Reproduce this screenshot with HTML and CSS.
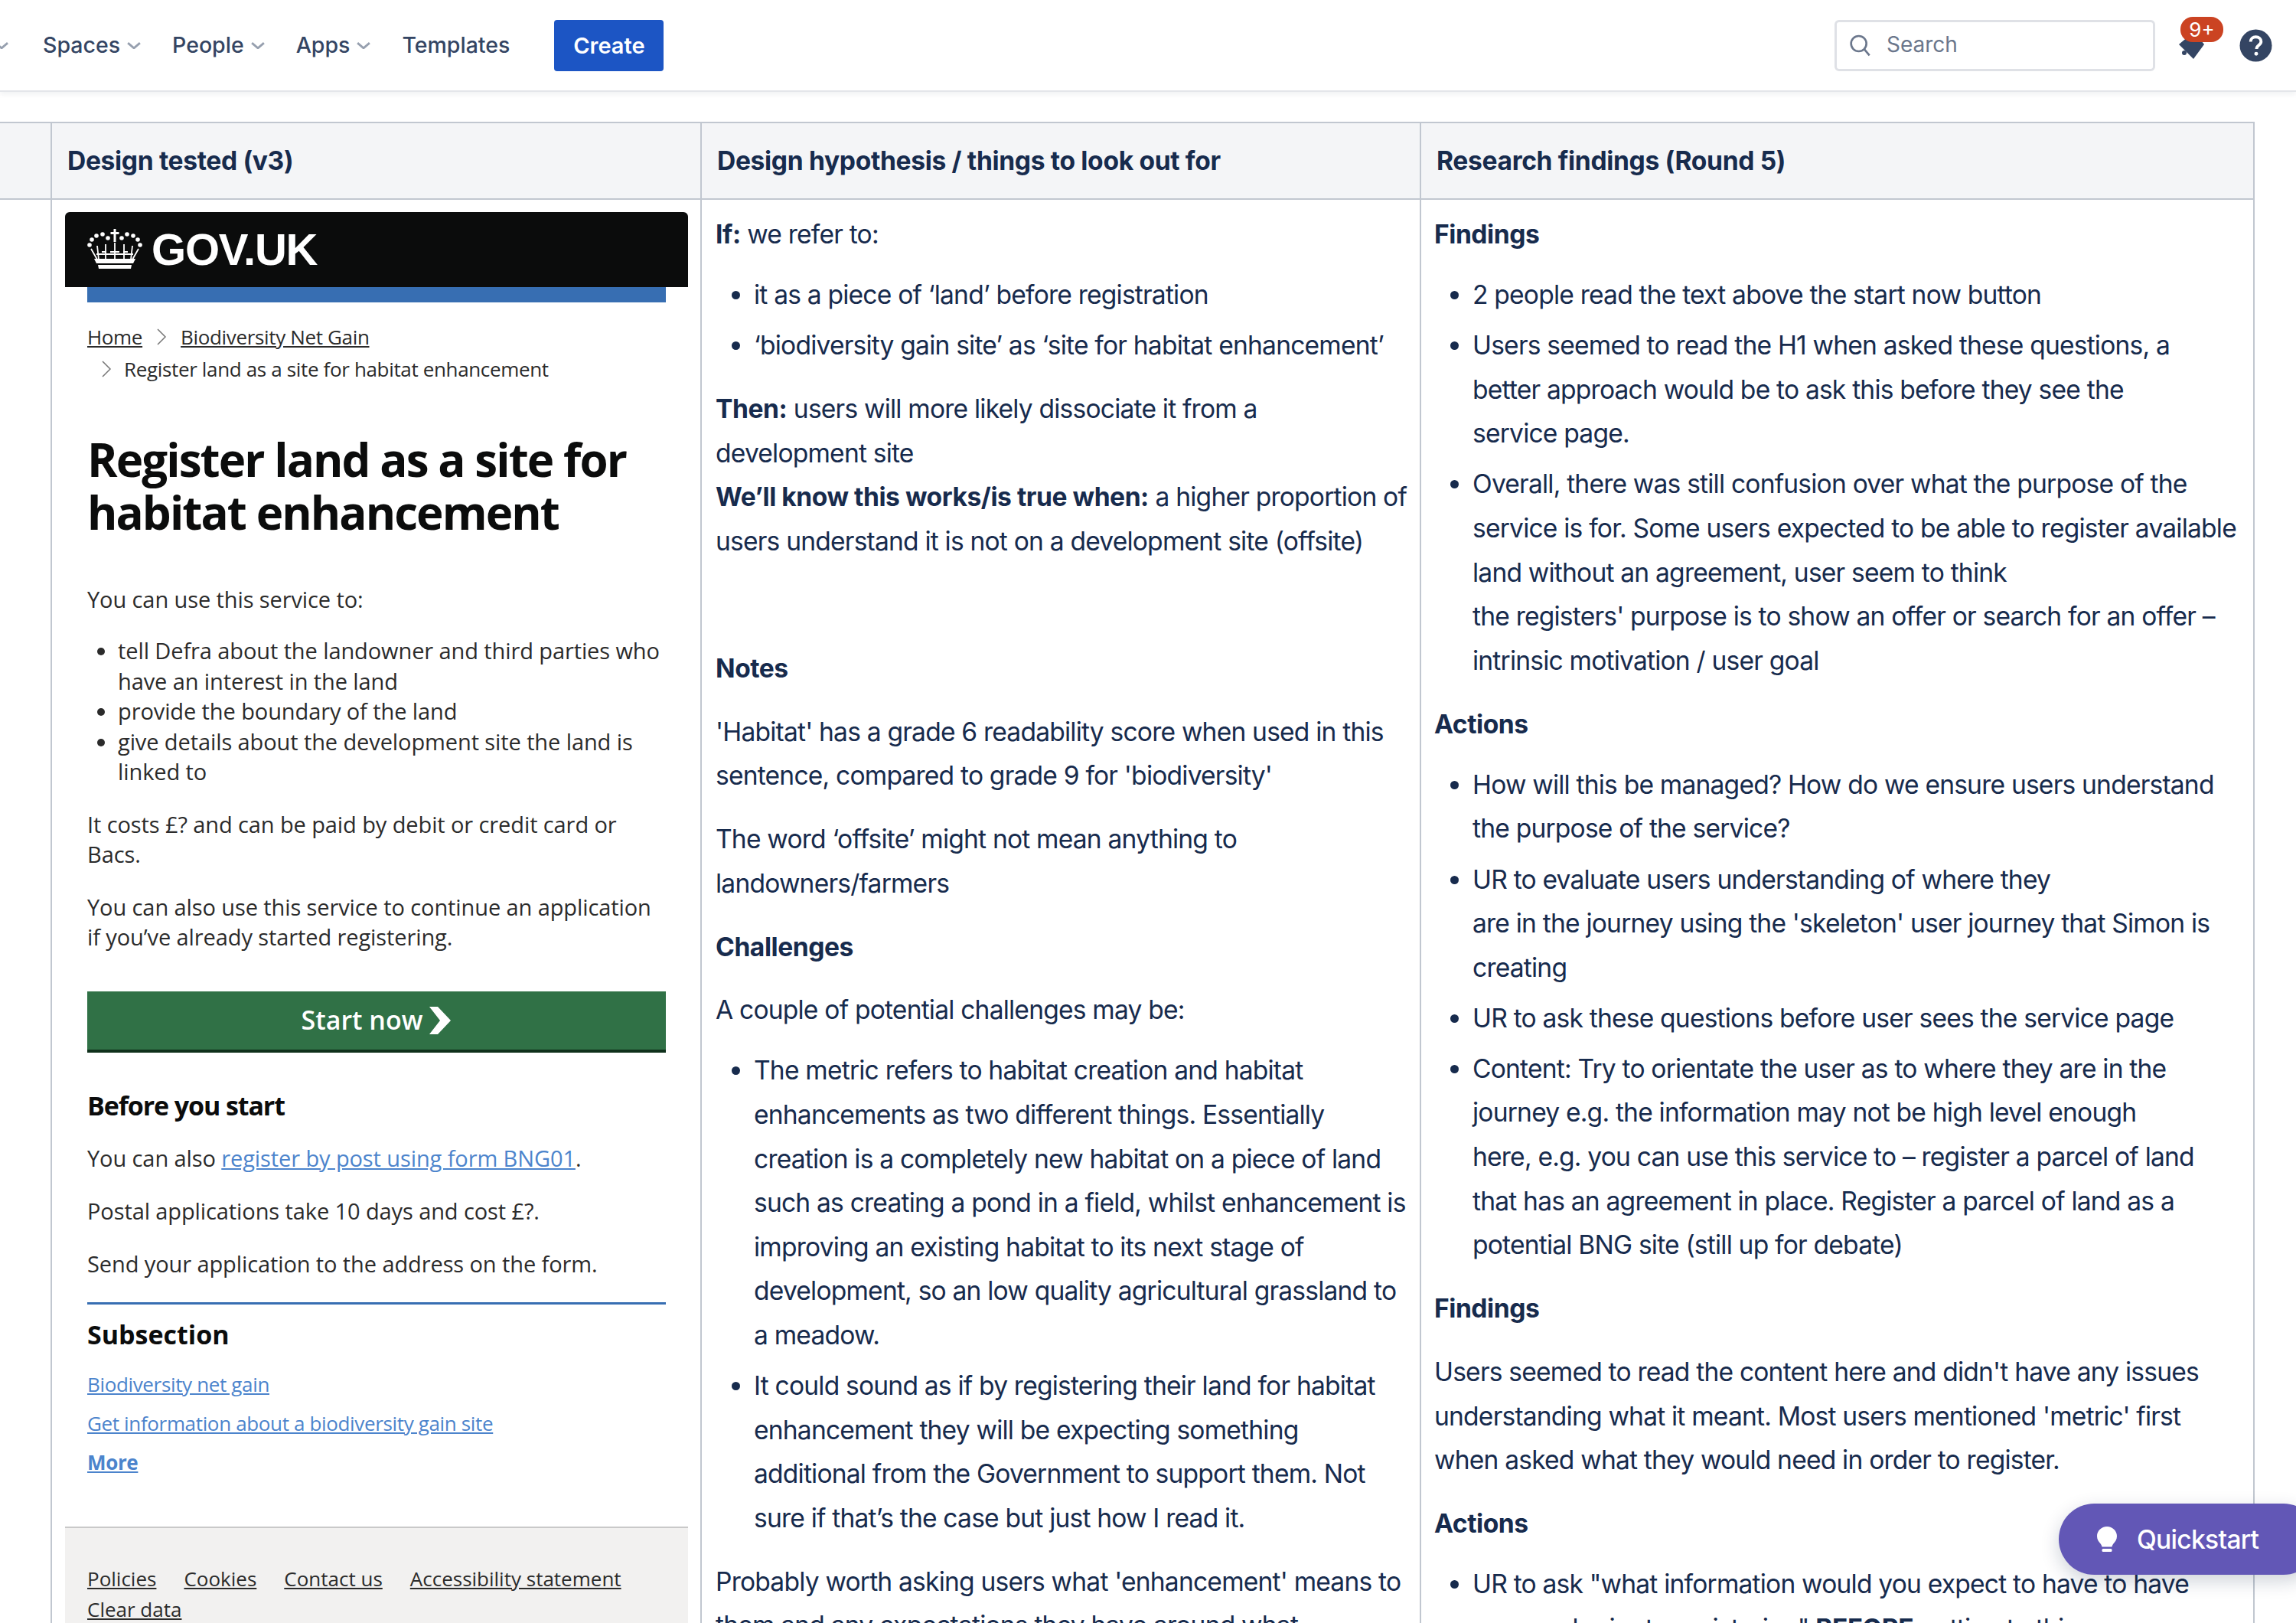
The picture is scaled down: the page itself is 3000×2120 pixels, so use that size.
FILE: index.html
```html
<!DOCTYPE html>
<html lang="en">
<head>
  <meta charset="UTF-8" />
  <title>Design tested</title>
  <link rel="stylesheet" href="styles.css">
</head>
<body>

<header class="topbar">
  <svg class="chev chev-cut" viewBox="11 8 8 8"><path d="M5 9l7 6 7-6"/></svg>
  <a class="nav-link nav-first">Spaces<svg class="chev" viewBox="4 8 16 8"><path d="M5 9l7 6 7-6"/></svg></a>
  <a class="nav-link">People<svg class="chev" viewBox="4 8 16 8"><path d="M5 9l7 6 7-6"/></svg></a>
  <a class="nav-link">Apps<svg class="chev" viewBox="4 8 16 8"><path d="M5 9l7 6 7-6"/></svg></a>
  <a class="nav-link nav-last">Templates</a>
  <button class="create-btn">Create</button>
  <div class="topbar-right">
    <div class="search">
      <svg class="search-icon" viewBox="0 0 24 24"><circle cx="11" cy="10.500" r="7.500"/><path d="M16.500 16l5 6"/></svg>
      <span>Search</span>
    </div>
    <div class="bell">
      <svg viewBox="0 0 34 36"><path d="M0 17L20 0l13 17-14 19z"/><circle cx="7" cy="28" r="3"/></svg>
      <span class="badge">9+</span>
    </div>
    <svg class="help" viewBox="0 0 44 44"><circle cx="22" cy="22" r="21.500"/><path class="help-mark" d="M15 17c0-4 3-6.500 7-6.500s7 2.500 7 6c0 5-6 5-6 10"/><circle class="help-dot" cx="22.500" cy="33" r="2.500"/></svg>
  </div>
</header>

<table class="grid">
  <colgroup>
    <col class="col-0"><col class="col-1"><col class="col-2"><col class="col-3">
  </colgroup>
  <thead>
    <tr>
      <th></th>
      <th>Design tested (v3)</th>
      <th>Design hypothesis / things to look out for</th>
      <th>Research findings (Round 5)</th>
    </tr>
  </thead>
  <tbody>
    <tr>
      <td></td>
      <td class="shot-cell">
        <div class="gov">
          <div class="gov-head">
            <svg class="crown" viewBox="0 0 72 52">
              <path d="M34.500 0h3v4h4v3h-4v10h-3V7h-4V4h4z"/>
              <circle cx="27" cy="12" r="2.800"/><circle cx="45" cy="12" r="2.800"/>
              <circle cx="20" cy="7" r="2.800"/><circle cx="52" cy="7" r="2.800"/>
              <circle cx="12" cy="9" r="2.800"/><circle cx="60" cy="9" r="2.800"/>
              <circle cx="6" cy="14" r="2.800"/><circle cx="66" cy="14" r="2.800"/>
              <circle cx="3" cy="21" r="2.800"/><circle cx="69" cy="21" r="2.800"/>
              <path class="crown-lines" d="M36 18v22M24 20v20M48 20v20M13 22l2 18M59 22l-2 18M5 26l8 14M67 26l-8 14M19 30h6M30 30h12M47 30h6M12 33h48"/>
              <path d="M9 39h54l-3 6H12zM14 47h44l-1 5H15z"/>
            </svg>
            <span class="gov-logo">GOV.UK</span>
          </div>
          <div class="gov-bar"></div>
          <div class="gov-body">
            <div class="crumbs">
              <a>Home</a><svg class="crumb-sep" viewBox="0 0 14 24"><path d="M2 2l10 10L2 22"/></svg><a>Biodiversity Net Gain</a>
            </div>
            <div class="crumbs crumbs-last">
              <svg class="crumb-sep" viewBox="0 0 14 24"><path d="M2 2l10 10L2 22"/></svg>Register land as a site for habitat enhancement
            </div>
            <h1>Register land as a site for habitat enhancement</h1>
            <p class="gov-lede">You can use this service to:</p>
            <ul class="gov-list">
              <li>tell Defra about the landowner and third parties who have an interest in the land</li>
              <li>provide the boundary of the land</li>
              <li>give details about the development site the land is linked to</li>
            </ul>
            <p class="gov-p">It costs £? and can be paid by debit or credit card or Bacs.</p>
            <p class="gov-p">You can also use this service to continue an application if you’ve already started registering.</p>
            <div class="start-btn">Start now<svg viewBox="0 0 30 38"><path d="M1 1h11l17 18-17 18H1l14-18z"/></svg></div>
            <h2>Before you start</h2>
            <p class="gov-q">You can also <a class="gov-a">register by post using form BNG01</a>.</p>
            <p class="gov-q">Postal applications take 10 days and cost £?.</p>
            <p class="gov-q">Send your application to the address on the form.</p>
            <div class="gov-rule"></div>
            <h3>Subsection</h3>
            <a class="sub-link">Biodiversity net gain</a>
            <a class="sub-link">Get information about a biodiversity gain site</a>
            <a class="sub-link sub-more">More</a>
          </div>
          <div class="gov-foot">
            <a>Policies</a><a>Cookies</a><a>Contact us</a><a>Accessibility statement</a><a>Clear data</a>
          </div>
        </div>
      </td>
      <td>
        <p><strong>If:</strong> we refer to:</p>
        <ul>
          <li>it as a piece of ‘land’ before registration</li>
          <li>‘biodiversity gain site’ as ‘site for habitat enhancement’</li>
        </ul>
        <p><strong>Then:</strong> users will more likely dissociate it from a development site<br>
          <strong>We’ll know this works/is true when:</strong> a higher proportion of users understand it is not on a development site (offsite)</p>
        <p><br></p>
        <p><strong>Notes</strong></p>
        <p>'Habitat' has a grade 6 readability score when used in this sentence, compared to grade 9 for 'biodiversity'</p>
        <p>The word ‘offsite’ might not mean anything to landowners/farmers</p>
        <p><strong>Challenges</strong></p>
        <p>A couple of potential challenges may be:</p>
        <ul>
          <li>The metric refers to habitat creation and habitat enhancements as two different things. Essentially creation is a completely new habitat on a piece of land such as creating a pond in a field, whilst enhancement is improving an existing habitat to its next stage of development, so an low quality agricultural grassland to a meadow.</li>
          <li>It could sound as if by registering their land for habitat enhancement they will be expecting something additional from the Government to support them. Not sure if that’s the case but just how I read it.</li>
        </ul>
        <p>Probably worth asking users what 'enhancement' means to them and any expectations they have around what</p>
      </td>
      <td>
        <p><strong>Findings</strong></p>
        <ul>
          <li>2 people read the text above the start now button</li>
          <li>Users seemed to read the H1 when asked these questions, a better approach would be to ask this before they see the service&nbsp;page.</li>
          <li>Overall, there was still confusion over what the purpose of the service is for. Some users expected to be able to register available land without an agreement, user seem to think<br>the registers' purpose is to show an offer or search for an offer – intrinsic motivation / user goal</li>
        </ul>
        <p><strong>Actions</strong></p>
        <ul>
          <li>How will this be managed? How do we ensure users understand the purpose of the service?</li>
          <li>UR to evaluate users understanding of where they<br>are in the journey using the 'skeleton' user journey that Simon is creating</li>
          <li>UR to ask these questions before user sees the service page</li>
          <li>Content: Try to orientate the user as to where they are in the journey e.g. the information may not be high level enough<br>here, e.g. you can use this service to – register a parcel of land that has an agreement in place. Register a parcel of land as a potential BNG site (still up for debate)</li>
        </ul>
        <p><strong>Findings</strong></p>
        <p>Users seemed to read the content here and didn't have any issues understanding what it meant. Most users mentioned 'metric' first when asked what they would need in order to register.</p>
        <p><strong>Actions</strong></p>
        <ul>
          <li>UR to ask "what information would you expect to have to have prepared prior to registering" <strong>BEFORE</strong> getting to this page</li>
        </ul>
      </td>
    </tr>
  </tbody>
</table>

<button class="quickstart">
  <svg viewBox="0 0 26 34"><path d="M13 0C5.800 0 0 5.600 0 12.600c0 4.200 2 7 4.200 9.400 1.200 1.400 2 2.800 2.300 4.500h13c.3-1.700 1.100-3.100 2.300-4.500 2.200-2.400 4.200-5.200 4.200-9.400C26 5.600 20.200 0 13 0z"/><rect x="6.500" y="29" width="13" height="4" rx="1.500"/></svg>
  Quickstart
</button>

</body>
</html>
```

FILE: styles.css
```css
html, body {
  margin: 0;
  height: 2120px;
  overflow: hidden;
  background: #fff;
}
body {
  font-family: Inter, "Liberation Sans", sans-serif;
  font-size: 33.6px;
  line-height: 57.6px;
  letter-spacing: -0.8px;
  color: #172b4d;
}

/* top bar */
.topbar {
  display: flex;
  align-items: center;
  height: 118px;
  border-bottom: 2px solid #e4e6ea;
  box-shadow: 0 4px 6px rgba(9, 30, 66, 0.05);
  font-size: 28.500px;
  letter-spacing: 0;
  color: #42526e;
}
.chev {
  width: 18px;
  height: 9px;
  margin-left: 9px;
  fill: none;
  stroke: #97a0af;
  stroke-width: 2.500;
}
.chev-cut {
  width: 11px;
  margin-left: 0;
}
.nav-link {
  display: flex;
  align-items: center;
  margin-right: 41px;
  color: #344563;
  font-weight: 500;
}
.nav-first {
  margin-left: 45px;
}
.nav-last {
  margin-right: 58px;
}
.create-btn {
  width: 143px;
  height: 67px;
  border: none;
  border-radius: 4px;
  background: #1c55c4;
  color: #fff;
  font: 600 29px Inter, sans-serif;
}
.topbar-right {
  display: flex;
  align-items: center;
  margin-left: auto;
  margin-right: 31px;
}
.search {
  display: flex;
  align-items: center;
  gap: 19px;
  box-sizing: border-box;
  width: 419px;
  height: 67px;
  padding-left: 14px;
  border: 3px solid #dfe1e6;
  border-radius: 6px;
  color: #6b778c;
  font-size: 28px;
  letter-spacing: 0;
}
.search-icon {
  width: 32px;
  height: 32px;
  fill: none;
  stroke: #6b778c;
  stroke-width: 2;
}
.bell {
  position: relative;
  width: 34px;
  height: 36px;
  margin-left: 31px;
}
.bell svg {
  display: block;
  width: 34px;
  height: 36px;
  fill: #344563;
}
.badge {
  position: absolute;
  top: -19px;
  left: 2px;
  width: 56px;
  height: 33px;
  border-radius: 16px;
  background: #cb4322;
  color: #fff;
  font-size: 26px;
  line-height: 33px;
  text-align: center;
}
.help {
  width: 43px;
  height: 43px;
  margin-left: 45px;
}
.help circle {
  fill: #344563;
}
.help .help-dot {
  fill: #fff;
}
.help-mark {
  fill: none;
  stroke: #fff;
  stroke-width: 4;
}

/* table */
.grid {
  width: 2946px;
  margin-top: 39px;
  table-layout: fixed;
  border-collapse: collapse;
}
.col-0 { width: 67px; }
.col-1 { width: 849px; }
.col-2 { width: 940px; }
.col-3 { width: 1089px; }
.grid th,
.grid td {
  border: 2px solid #c1c7d0;
  vertical-align: top;
}
.grid th:first-child,
.grid td:first-child {
  border-left: none;
}
.grid th {
  height: 98px;
  padding: 0 20px;
  background: #f4f5f7;
  text-align: left;
  vertical-align: middle;
  font-weight: 700;
  letter-spacing: -0.33px;
}
.grid td {
  padding: 16px 14px 0 18px;
}
.grid td:last-child {
  padding-left: 17px;
}
.grid p {
  margin: 25.300px 0 0;
}
.grid td > p:first-child {
  margin-top: 0;
}
.grid ul {
  margin: 21.500px 0 0;
  padding-left: 50px;
}
.grid li {
  margin-top: 8.500px;
}
.grid li:first-child {
  margin-top: 0;
}
.grid strong {
  font-weight: 700;
  letter-spacing: -0.45px;
}

/* the pasted GOV.UK picture */
.grid .shot-cell {
  padding: 16px 16px 0 17px;
}
.gov {
  font-family: "Open Sans", sans-serif;
  letter-spacing: 0;
  color: #2b2b2b;
}
.gov-head {
  display: flex;
  align-items: center;
  gap: 12px;
  box-sizing: border-box;
  height: 98px;
  padding: 0 0 2px 29px;
  border-radius: 6px 6px 0 0;
  background: #0b0c0c;
  color: #fff;
}
.crown {
  width: 72px;
  height: 52px;
  fill: #fff;
}
.crown-lines {
  fill: none;
  stroke: #fff;
  stroke-width: 1.800;
}
.gov-logo {
  font: 700 58px "Liberation Sans", sans-serif;
  letter-spacing: -1.200px;
}
.gov-bar {
  height: 20px;
  margin: 0 29px;
  background: #376eb2;
}
.gov-body {
  padding: 24px 29px 0;
}
.crumbs {
  display: flex;
  align-items: center;
  height: 42px;
  font-size: 26px;
  line-height: 36px;
  letter-spacing: -0.35px;
}
.crumbs a {
  text-decoration: underline;
}
.crumb-sep {
  width: 14px;
  height: 24px;
  margin: 0 18px;
  fill: none;
  stroke: #777;
  stroke-width: 1.500;
}
.crumbs-last .crumb-sep {
  margin: 0 16px 0 18px;
}
.gov h1 {
  margin: 63px 0 0;
  font-size: 60px;
  line-height: 69px;
  letter-spacing: -1.900px;
  color: #0b0c0c;
}
.grid .gov-lede {
  margin: 59px 0 0;
  font-size: 29px;
  line-height: 39px;
  letter-spacing: -0.1px;
}
.grid .gov-list {
  margin: 28px 0 0;
  padding-left: 40px;
  font-size: 29px;
  line-height: 39.500px;
  letter-spacing: -0.1px;
}
.grid .gov-list li {
  margin: 0;
}
.grid .gov-p {
  margin: 29px 0 0;
  font-size: 29px;
  line-height: 39.500px;
  letter-spacing: -0.1px;
}
.start-btn {
  display: flex;
  align-items: center;
  justify-content: center;
  gap: 8px;
  box-sizing: border-box;
  height: 80px;
  margin-top: 51px;
  border-bottom: 4px solid #10311c;
  background: #307146;
  color: #fff;
  font-size: 34px;
  font-weight: 600;
}
.start-btn svg {
  width: 30px;
  height: 38px;
  fill: #fff;
}
.gov h2 {
  margin: 46px 0 -2px;
  font-size: 34px;
  line-height: 46px;
  letter-spacing: -1.100px;
  color: #0b0c0c;
}
.grid .gov-q {
  margin: 27px 0 0;
  font-size: 29px;
  line-height: 42px;
  letter-spacing: -0.1px;
}
.gov-a,
.sub-link {
  color: #4c84cc;
  text-decoration: underline;
}
.gov-rule {
  height: 3px;
  margin-top: 29px;
  background: #376eb2;
}
.gov h3 {
  margin: 16px 0 0;
  font-size: 34px;
  line-height: 46px;
  color: #0b0c0c;
}
.sub-link {
  display: block;
  font-size: 26px;
  line-height: 51px;
  letter-spacing: -0.35px;
}
.sub-link:nth-of-type(1) {
  margin-top: 17px;
}
.sub-more {
  font-weight: 700;
}
.gov-foot {
  display: flex;
  flex-wrap: wrap;
  gap: 0 36px;
  margin-top: 58px;
  padding: 46px 29px 0;
  border-top: 2px solid #c9c9c9;
  background: #f2f1f0;
  font-size: 26px;
  line-height: 40px;
}
.gov-foot a {
  text-decoration: underline;
}

.quickstart {
  position: absolute;
  top: 1964px;
  left: 2690px;
  display: flex;
  align-items: center;
  gap: 26px;
  box-sizing: border-box;
  width: 340px;
  height: 93px;
  padding-left: 50px;
  border: none;
  border-radius: 47px;
  background: #6257b6;
  box-shadow: 0 8px 24px rgba(9, 30, 66, 0.2);
  color: #fff;
  font: 500 33.600px Inter, sans-serif;
  letter-spacing: -0.7px;
}
.quickstart svg {
  width: 26px;
  height: 34px;
  fill: #fff;
}
```
